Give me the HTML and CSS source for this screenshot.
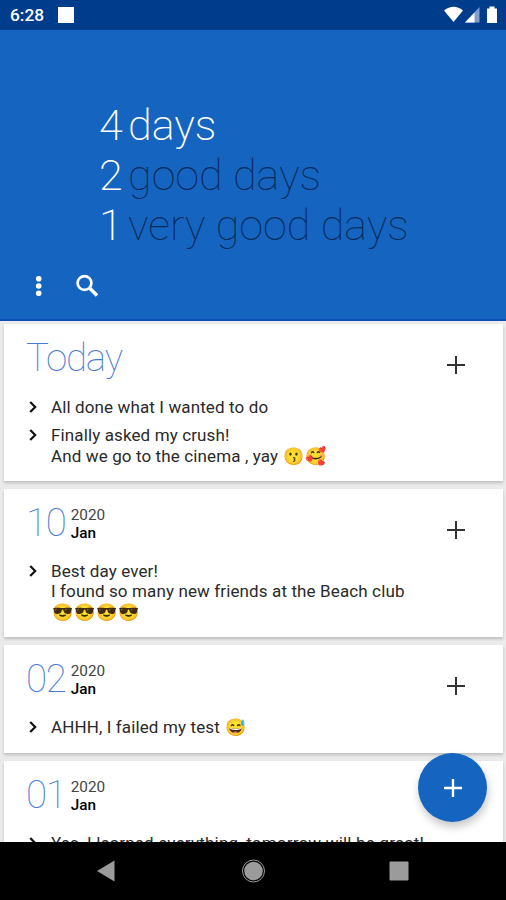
FILE: index.html
```html
<!DOCTYPE html>
<html lang="en">
<head>
	<meta charset="UTF-8">
	<title>Diary</title>
	<meta name="viewport" content="width=device-width">
	<link rel="stylesheet" href="styles.css">
</head>
<body>
	<div class="phone">
		<div class="status-bar">
			<span class="time">6:28</span>
			<span class="notification"></span>
			<svg class="status-icons" width="54" height="20" viewBox="0 0 54 20">
				<path d="M0 5.5Q9.500-2 19 5.500L9.500 17z" fill="#fff"/>
				<path d="M35.500 2V17.500H21z" fill="#7fa0cd"/>
				<path d="M30.500 7.500V17.500H21z" fill="#fff"/>
				<path d="M45.500 1.500h5v2h2.500v14.500h-10v-14.500h2.500z" fill="#fff"/>
			</svg>
		</div>

		<header class="header">
			<div class="stats">
				<div class="stat first"><span class="number">4</span><span class="label">days</span></div>
				<div class="stat"><span class="number">2</span><span class="label">good days</span></div>
				<div class="stat"><span class="number">1</span><span class="label">very good days</span></div>
			</div>
			<div class="toolbar">
				<svg width="8" height="24" viewBox="0 0 8 24" fill="#fff">
					<circle cx="3.700" cy="4.800" r="2.800"/>
					<circle cx="3.700" cy="12" r="2.800"/>
					<circle cx="3.700" cy="19.200" r="2.800"/>
				</svg>
				<svg width="24" height="24" viewBox="0 0 24 24" fill="none" stroke="#fff">
					<circle cx="8.500" cy="9" r="6.900" stroke-width="2.700"/>
					<path d="M13.500 14L21 21.500" stroke-width="3.600"/>
				</svg>
			</div>
		</header>

		<main class="days">
			<section class="card today">
				<div class="card-head">
					<h2 class="day">Today</h2>
					<svg class="add" width="18" height="18" viewBox="0 0 18 18"><path d="M9 0V18M0 9H18"/></svg>
				</div>
				<ul>
					<li>
						<svg class="arrow" width="8" height="12" viewBox="0 0 8 12"><path d="M1.200 1L6.200 6L1.200 11"/></svg>
						<p>All done what I wanted to do</p>
					</li>
					<li>
						<svg class="arrow" width="8" height="12" viewBox="0 0 8 12"><path d="M1.200 1L6.200 6L1.200 11"/></svg>
						<p>Finally asked my crush!<br>And we go to the cinema , yay <span class="emoji">😗🥰</span></p>
					</li>
				</ul>
			</section>

			<section class="card second">
				<div class="card-head">
					<h2 class="day">10</h2>
					<div class="date">2020<b>Jan</b></div>
					<svg class="add" width="18" height="18" viewBox="0 0 18 18"><path d="M9 0V18M0 9H18"/></svg>
				</div>
				<ul>
					<li>
						<svg class="arrow" width="8" height="12" viewBox="0 0 8 12"><path d="M1.200 1L6.200 6L1.200 11"/></svg>
						<p>Best day ever!<br>I found so many new friends at the Beach club<br><span class="emoji">😎😎😎😎</span></p>
					</li>
				</ul>
			</section>

			<section class="card third">
				<div class="card-head">
					<h2 class="day">02</h2>
					<div class="date">2020<b>Jan</b></div>
					<svg class="add" width="18" height="18" viewBox="0 0 18 18"><path d="M9 0V18M0 9H18"/></svg>
				</div>
				<ul>
					<li>
						<svg class="arrow" width="8" height="12" viewBox="0 0 8 12"><path d="M1.200 1L6.200 6L1.200 11"/></svg>
						<p>AHHH, I failed my test <span class="emoji">😅</span></p>
					</li>
				</ul>
			</section>

			<section class="card last">
				<div class="card-head">
					<h2 class="day">01</h2>
					<div class="date">2020<b>Jan</b></div>
				</div>
				<ul>
					<li>
						<svg class="arrow" width="8" height="12" viewBox="0 0 8 12"><path d="M1.200 1L6.200 6L1.200 11"/></svg>
						<p>Yes, I learned everything, tomorrow will be great!</p>
					</li>
				</ul>
			</section>
		</main>

		<div class="fab">
			<svg width="18" height="18" viewBox="0 0 18 18"><path d="M9 0V18M0 9H18"/></svg>
		</div>

		<nav class="nav-bar">
			<svg width="506" height="58" viewBox="0 0 506 58" fill="#9b9b9b">
				<path d="M97 29L114.500 18.500V39.500z"/>
				<circle cx="253.500" cy="29" r="9.300"/>
				<circle cx="253.500" cy="29" r="11" fill="none" stroke="#9b9b9b" stroke-width="1"/>
				<rect x="389.500" y="19.500" width="19" height="19" rx="1"/>
			</svg>
		</nav>
	</div>
</body>
</html>
```
FILE: styles.css
```css
* {
	list-style: none;
	padding: 0;
	margin: 0;
	box-sizing: border-box;
}

body {
	font-family: Roboto, "Noto Color Emoji", sans-serif;
	font-size: 17px;
	color: #2a2a2a;
}

svg {
	display: block;
	flex: none;
}

.phone {
	position: relative;
	display: flex;
	flex-direction: column;
	width: 506px;
	height: 900px;
	overflow: hidden;
	background: #ebebeb;
}

.status-bar {
	display: flex;
	align-items: center;
	flex: none;
	height: 30px;
	padding: 0 8px 0 10px;
	background: #003c8c;
	color: #fff;
}

.time {
	width: 48px;
	font-size: 17.300px;
	font-weight: 500;
}

.notification {
	width: 16px;
	height: 16px;
	background: #fff;
}

.status-icons {
	margin-left: auto;
}

.header {
	flex: none;
	height: 291px;
	padding: 70px 0 0 99px;
	background: #1565c0;
	border-bottom: 2px solid #0a50b4;
}

.stat {
	display: flex;
	height: 50px;
	font-size: 43.100px;
	line-height: 51px;
	font-weight: 100;
	color: #052a5c;
}

.stat .number {
	width: 29px;
	color: #fff;
	font-weight: 200;
}

.stat.first {
	color: #fff;
	font-weight: 200;
}

.toolbar {
	display: flex;
	gap: 33px;
	margin: 24px 0 0 -64px;
}

.days {
	flex: 1;
	min-height: 0;
	overflow: hidden;
	padding: 3px 3px 0 4px;
}

.card {
	margin-bottom: 8px;
	padding: 16px 38px 0 22px;
	background: #fff;
	box-shadow: 0 2px 3px rgba(0, 0, 0, .2);
}

.today {
	height: 157px;
}

.second {
	height: 148px;
}

.third {
	height: 108px;
}

.card-head {
	display: flex;
	height: 36px;
}

.today .card-head {
	height: 37px;
}

.day {
	font-size: 38.500px;
	line-height: 36px;
	font-weight: 100;
	letter-spacing: -1.200px;
	color: #4a78d4;
}

.date {
	margin-left: 5px;
	padding-top: 2px;
	font-size: 15.300px;
	line-height: 17.500px;
	color: #444;
}

.date b {
	display: block;
	font-weight: 500;
	color: #000;
}

.add {
	margin: 16px 0 0 auto;
	stroke: #333;
	stroke-width: 2;
}

ul {
	padding-top: 20px;
}

li {
	display: flex;
	margin-bottom: 8px;
	line-height: 20.300px;
	letter-spacing: .120px;
}

.last li {
	letter-spacing: .200px;
}

.emoji {
	margin-left: 1px;
	letter-spacing: .900px;
}

.arrow {
	margin: 4px 14px 0 3px;
	fill: none;
	stroke: #111;
	stroke-width: 2.200;
}

.fab {
	position: absolute;
	left: 418px;
	top: 753px;
	display: flex;
	align-items: center;
	justify-content: center;
	width: 69px;
	height: 69px;
	border-radius: 50%;
	background: #1565c0;
	box-shadow: 1px 5px 8px rgba(0, 0, 0, .22);
}

.fab svg {
	stroke: #fff;
	stroke-width: 2.400;
}

.nav-bar {
	position: relative;
	flex: none;
	height: 58px;
	background: #000;
}
```
